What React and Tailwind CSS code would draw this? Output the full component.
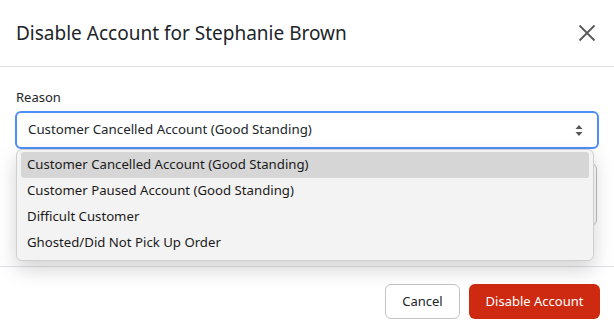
import React from 'react';

const reasons = [
  'Customer Cancelled Account (Good Standing)',
  'Customer Paused Account (Good Standing)',
  'Difficult Customer',
  'Ghosted/Did Not Pick Up Order',
];

const font = { fontFamily: '"Segoe UI", "Noto Sans", "Open Sans", sans-serif' };

export default function App() {
  return (
    <div className="relative w-[614px] h-[331px] bg-white overflow-hidden text-[#212529]" style={font}>
      {/* Header */}
      <div className="h-[67px] flex items-center justify-between pl-4 pr-[18px] border-b border-[#dee2e6]">
        <h2 className="text-[19px] leading-none">Disable Account for Stephanie Brown</h2>
        <button className="text-[#5a5a5a]">
          <svg width="18" height="18" viewBox="0 0 18 18" fill="none" stroke="currentColor" strokeWidth="1.8">
            <path d="M1.5 1.5 16.5 16.5M16.5 1.5 1.5 16.5" />
          </svg>
        </button>
      </div>

      {/* Body */}
      <div className="h-[200px] px-4 pt-[21px] border-b border-[#dee2e6]">
        <label className="block text-[13px] leading-[18px] mb-[5px]">Reason</label>
        <div className="h-[38px] w-[584px] -ml-px rounded-md border-2 border-[#4d8ef7] flex items-center justify-between pl-[11px] pr-[14px]">
          <span className="text-[13.3px]">Customer Cancelled Account (Good Standing)</span>
          <svg width="8" height="11" viewBox="0 0 8 11" fill="#555">
            <path d="M4 0 7.5 4H.5Z M4 11 .5 7h7Z" />
          </svg>
        </div>
        <div className="mt-[14px] h-[63px] w-[581px] rounded-md border border-[#bdbdbd]" />
      </div>

      {/* Footer */}
      <div className="flex justify-end gap-[9px] pt-[17px] pr-[14px]">
        <button className="h-[35px] w-[75px] rounded-md border border-[#c4c4c4] bg-white text-[13px]">Cancel</button>
        <button className="h-[35px] w-[131px] rounded-md bg-[#cd2a11] text-white text-[13px]">Disable Account</button>
      </div>

      {/* Open select list */}
      <div className="absolute left-[16px] top-[149px] w-[578px] rounded-md border border-[#cfcfcf] bg-[#f3f3f3] px-[4px] pt-[2px] pb-[4px] shadow-[0_8px_20px_rgba(0,0,0,0.18)]">
        {reasons.map((r, i) => (
          <div
            key={r}
            className={i === 0
              ? 'h-[26px] flex items-center px-[6px] rounded-[3px] bg-[#d6d6d6] text-[13.2px] text-[#1a1a1a]'
              : 'h-[26px] flex items-center px-[6px] text-[13.2px] text-[#1a1a1a]'}
          >
            {r}
          </div>
        ))}
      </div>
    </div>
  );
}
